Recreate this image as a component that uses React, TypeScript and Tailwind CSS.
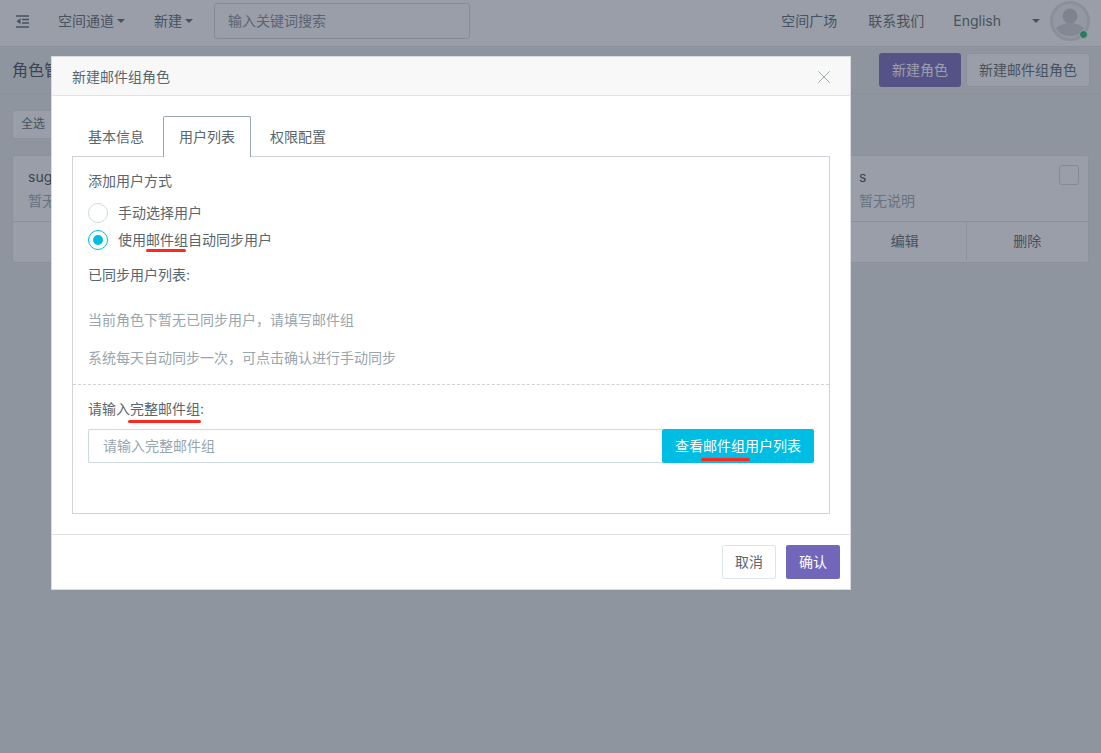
import { X } from 'lucide-react'

const font = "font-['Inter','Noto_Sans_CJK_SC',sans-serif]"

function Underline({ className }: { className: string }) {
  return <span className={`absolute h-[3px] rounded-full bg-[#ff2a1f] ${className}`} />
}

function Caret({ className }: { className: string }) {
  return <span className={`h-0 w-0 border-x-4 border-t-4 border-x-transparent border-t-[#58666e] ${className}`} />
}

function RoleCard({ name }: { name: string }) {
  return (
    <div className="flex h-[108px] w-[246px] flex-col rounded-[3px] border border-[#dee5e7] bg-white">
      <div className="relative flex-1 px-[15px] pt-[10px]">
        <p className="text-sm leading-[22px] text-[#3f4a59]">{name}</p>
        <p className="mt-[3px] text-sm leading-[20px] text-[#98a6ad]">暂无说明</p>
        <span className="absolute top-[9px] right-[9px] h-5 w-5 rounded-[3px] border border-[#cfdadd] bg-white" />
      </div>
      <div className="flex h-[41px] border-t border-[#dee5e7] pb-[2px] text-sm text-[#58666e]">
        <button className="flex-1">编辑</button>
        <button className="flex-1 border-l border-[#dee5e7]">删除</button>
      </div>
    </div>
  )
}

export default function App() {
  return (
    <div className={`relative h-[753px] w-[1101px] overflow-hidden bg-[#e7eded] ${font}`}>
      <nav className="flex h-[47px] items-center border-b border-[#dee5e7] bg-white pr-[11px] pb-1 text-sm text-[#58666e]">
        <svg className="ml-4 h-[13px] w-[13px]" viewBox="0 0 13 13" fill="none" stroke="#58666e">
          <path d="M0 1h13M6 4.5h7M6 8h7M0 12h13" strokeWidth="1.7" />
          <path d="M4.5 3.2v6L0.5 6.2z" fill="#58666e" stroke="none" />
        </svg>
        <span className="ml-[29px]">空间通道</span>
        <Caret className="ml-[3px]" />
        <span className="ml-[29px]">新建</span>
        <Caret className="ml-[3px]" />
        <div className="ml-[21px] flex h-[36px] w-[256px] items-center rounded-[3px] border border-[#cfdadd] px-[13px] text-[#7f8a96]">
          输入关键词搜索
        </div>
        <div className="ml-auto flex items-center">
          <span>空间广场</span>
          <span className="ml-[31px]">联系我们</span>
          <span className="ml-[29px]">English</span>
          <Caret className="ml-[31px]" />
          <div className="relative ml-[10px] h-10 w-10">
            <svg viewBox="0 0 40 40" className="h-10 w-10">
              <circle cx="20" cy="20" r="18.5" fill="#f2f3f5" stroke="#dfe1e5" strokeWidth="3" />
              <circle cx="20" cy="15" r="7.5" fill="#c6c9cf" />
              <path d="M6 27c3-3 9-5 14-5s11 2 14 5c-3 6-8 8-14 8s-11-2-14-8z" fill="#d0d3d8" />
            </svg>
            <span className="absolute right-[2px] bottom-[2px] h-[9px] w-[9px] rounded-full border border-white bg-[#1fb866]" />
          </div>
        </div>
      </nav>

      <div className="flex h-[47px] items-center border-b border-[#dee5e7] pr-[11px] pl-3">
        <h1 className="text-base text-[#3f4a59]">角色管理</h1>
        <button className="ml-auto h-[34px] w-[82px] rounded-[3px] bg-[#7266ba] text-sm text-white">新建角色</button>
        <button className="ml-[5px] h-[34px] w-[124px] rounded-[3px] border border-[#dee5e7] bg-white text-sm text-[#58666e]">
          新建邮件组角色
        </button>
      </div>

      <div className="px-3 pt-4">
        <button className="block h-[29px] w-[44px] rounded-[3px] border border-[#dee5e7] bg-white pr-[2px] pb-[2px] text-xs text-[#58666e]">全选</button>
        <div className="mt-[16px] flex justify-between">
          <RoleCard name="sugar" />
          <RoleCard name="s" />
        </div>
      </div>

      <div className="absolute inset-0 bg-[#353d51]/50" />

      <div className="absolute top-[56px] left-[51px] flex h-[534px] w-[800px] flex-col border border-[#d8dbe0] bg-white text-sm">
        <div className="flex h-[39px] shrink-0 items-center justify-between border-b border-[#e0e3e8] bg-[#f8f8f8] pt-[2px] pr-[15px] pl-5">
          <span className="text-[#58666e]">新建邮件组角色</span>
          <X className="h-[22px] w-[22px] text-[#98a6ad]" strokeWidth={1} />
        </div>

        <div className="flex-1 px-5 pt-5">
          <div className="flex h-[41px] text-[#58666e]">
            <span className="flex w-[91px] items-center justify-center pr-[3px]">基本信息</span>
            <span className="z-10 flex h-[41px] w-[88px] items-center justify-center rounded-t-[2px] border border-b-0 border-[#98a6ad] bg-white">
              用户列表
            </span>
            <span className="flex w-[94px] items-center justify-center">权限配置</span>
          </div>

          <div className="-mt-px h-[358px] w-[758px] border border-[#d0d4da] text-[#58666e]">
            <div className="h-[228px] border-b border-dashed border-[#cfd3d9] px-[15px] pt-[14px]">
              <p className="leading-[20px]">添加用户方式</p>
              <label className="mt-[11px] flex h-[21px] items-center gap-[10px]">
                <span className="h-5 w-5 rounded-full border border-[#cfdadd] bg-white" />
                <span>手动选择用户</span>
              </label>
              <label className="mt-[6px] flex h-[21px] items-center gap-[10px]">
                <span className="flex h-5 w-5 items-center justify-center rounded-full border border-[#00bde3] bg-white">
                  <span className="h-[10px] w-[10px] rounded-full bg-[#00bde3]" />
                </span>
                <span>
                  使用
                  <span className="relative">
                    邮件组
                    <Underline className="top-[18px] left-0 w-[40px]" />
                  </span>
                  自动同步用户
                </span>
              </label>
              <p className="mt-[15px] leading-[20px]">已同步用户列表:</p>
              <p className="mt-[25px] leading-[20px] text-[#98a6ad]">当前角色下暂无已同步用户，请填写邮件组</p>
              <p className="mt-[18px] leading-[20px] text-[#98a6ad]">系统每天自动同步一次，可点击确认进行手动同步</p>
            </div>
            <div className="px-[15px] pt-[14px]">
              <p className="relative w-fit leading-[20px]">
                请输入完整邮件组:
                <Underline className="top-[21px] left-[40px] w-[73px]" />
              </p>
              <div className="mt-[10px] flex h-[34px]">
                <div className="flex flex-1 items-center rounded-l-[2px] border border-r-0 border-[#cfdadd] px-[14px] text-[#98a6ad]">
                  请输入完整邮件组
                </div>
                <button className="relative w-[152px] rounded-[2px] bg-[#00bde3] text-white">
                  查看邮件组用户列表
                  <Underline className="top-[29px] left-[39px] w-[49px]" />
                </button>
              </div>
            </div>
          </div>
        </div>

        <div className="flex h-[55px] shrink-0 items-center justify-end gap-[10px] border-t border-[#e0e3e8] pr-[10px]">
          <button className="h-[34px] w-[54px] rounded-[2px] border border-[#dee5e7] bg-white text-[#58666e]">取消</button>
          <button className="h-[34px] w-[54px] rounded-[2px] bg-[#7266ba] text-white">确认</button>
        </div>
      </div>
    </div>
  )
}
